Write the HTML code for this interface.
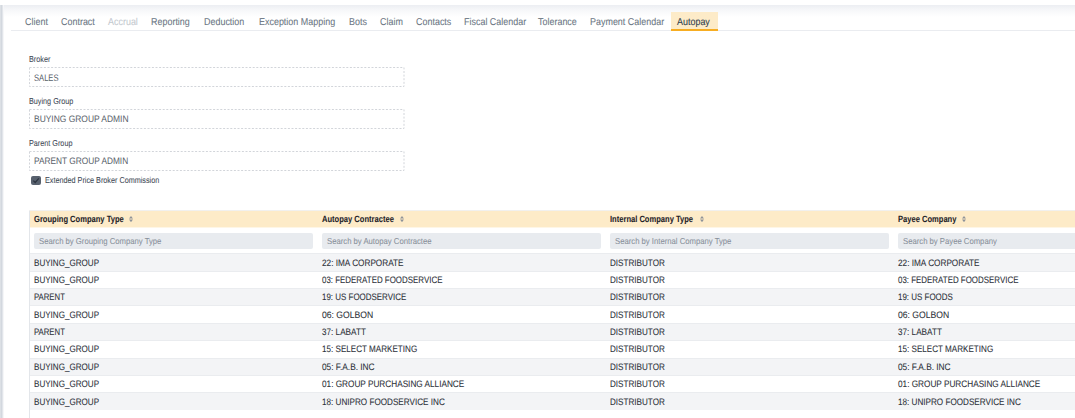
<!DOCTYPE html><html><head><meta charset="utf-8"><style>
html,body{margin:0;padding:0}
body{width:1075px;height:418px;overflow:hidden;background:#fff;position:relative;font-family:"Liberation Sans",sans-serif}
.t{position:absolute;white-space:nowrap;transform-origin:0 0;line-height:1;-webkit-text-stroke:0.08px currentColor;text-rendering:geometricPrecision}
.b{position:absolute}
</style></head><body>
<div class="b" style="left:0;top:5px;width:1075px;height:12px;background:linear-gradient(#eceef2,#f6f7f9 40%,#fff)"></div>
<div class="b" style="left:0;top:5px;width:1px;height:413px;background:#dce0e5"></div>
<div class="b" style="left:1px;top:5px;width:1px;height:413px;background:#d3d8df"></div>
<div class="b" style="left:2px;top:5px;width:1px;height:413px;background:#e2e5ea"></div>
<div class="b" style="left:3px;top:5px;width:1px;height:413px;background:#f5f6f8"></div>
<div class="b" style="left:11px;top:30px;width:1064px;height:1px;background:#eaecf0"></div>
<div class="b" style="left:671px;top:12px;width:47px;height:17px;background:#fdebc8"></div>
<div class="b" style="left:671px;top:29px;width:47px;height:2px;background:#f7ad22"></div>
<div class="t" style="left:24.70px;top:13px;font-size:10px;line-height:20px;color:#6b7683;font-weight:400;transform:scaleX(0.895);">Client</div>
<div class="t" style="left:60.70px;top:13px;font-size:10px;line-height:20px;color:#6b7683;font-weight:400;transform:scaleX(0.895);">Contract</div>
<div class="t" style="left:108.30px;top:13px;font-size:10px;line-height:20px;color:#c4c9cf;font-weight:400;transform:scaleX(0.895);">Accrual</div>
<div class="t" style="left:151.20px;top:13px;font-size:10px;line-height:20px;color:#6b7683;font-weight:400;transform:scaleX(0.895);">Reporting</div>
<div class="t" style="left:203.80px;top:13px;font-size:10px;line-height:20px;color:#6b7683;font-weight:400;transform:scaleX(0.895);">Deduction</div>
<div class="t" style="left:258.60px;top:13px;font-size:10px;line-height:20px;color:#6b7683;font-weight:400;transform:scaleX(0.895);">Exception Mapping</div>
<div class="t" style="left:348.80px;top:13px;font-size:10px;line-height:20px;color:#6b7683;font-weight:400;transform:scaleX(0.895);">Bots</div>
<div class="t" style="left:379.70px;top:13px;font-size:10px;line-height:20px;color:#6b7683;font-weight:400;transform:scaleX(0.895);">Claim</div>
<div class="t" style="left:415.60px;top:13px;font-size:10px;line-height:20px;color:#6b7683;font-weight:400;transform:scaleX(0.895);">Contacts</div>
<div class="t" style="left:464.30px;top:13px;font-size:10px;line-height:20px;color:#6b7683;font-weight:400;transform:scaleX(0.895);">Fiscal Calendar</div>
<div class="t" style="left:538.00px;top:13px;font-size:10px;line-height:20px;color:#6b7683;font-weight:400;transform:scaleX(0.895);">Tolerance</div>
<div class="t" style="left:589.90px;top:13px;font-size:10px;line-height:20px;color:#6b7683;font-weight:400;transform:scaleX(0.895);">Payment Calendar</div>
<div class="t" style="left:677.40px;top:13px;font-size:10px;line-height:20px;color:#2f3d4c;font-weight:400;transform:scaleX(0.895);">Autopay</div>
<div class="t" style="left:29.20px;top:49px;font-size:8.6px;line-height:20px;color:#444c58;font-weight:400;transform:scaleX(0.842);">Broker</div>
<svg class="b" style="left:29px;top:67.3px" width="376" height="20"><rect x="0.5" y="0.5" width="374.5" height="19" fill="none" stroke="#d2d5da" stroke-width="1" stroke-dasharray="2 1.6"/></svg>
<div class="t" style="left:34.10px;top:68px;font-size:9.4px;line-height:20px;color:#575e69;font-weight:400;transform:scaleX(0.81);-webkit-text-stroke:0;">SALES</div>
<div class="t" style="left:29.20px;top:91px;font-size:8.6px;line-height:20px;color:#444c58;font-weight:400;transform:scaleX(0.842);">Buying Group</div>
<svg class="b" style="left:29px;top:109.3px" width="376" height="20"><rect x="0.5" y="0.5" width="374.5" height="19" fill="none" stroke="#d2d5da" stroke-width="1" stroke-dasharray="2 1.6"/></svg>
<div class="t" style="left:34.10px;top:109px;font-size:9.4px;line-height:20px;color:#575e69;font-weight:400;transform:scaleX(0.9);-webkit-text-stroke:0;">BUYING GROUP ADMIN</div>
<div class="t" style="left:29.20px;top:133px;font-size:8.6px;line-height:20px;color:#444c58;font-weight:400;transform:scaleX(0.842);">Parent Group</div>
<svg class="b" style="left:29px;top:151.3px" width="376" height="20"><rect x="0.5" y="0.5" width="374.5" height="19" fill="none" stroke="#d2d5da" stroke-width="1" stroke-dasharray="2 1.6"/></svg>
<div class="t" style="left:34.10px;top:151px;font-size:9.4px;line-height:20px;color:#575e69;font-weight:400;transform:scaleX(0.886);-webkit-text-stroke:0;">PARENT GROUP ADMIN</div>
<div class="b" style="left:31px;top:176px;width:10px;height:9px;border-radius:2px;background:#58616e"></div>
<svg class="b" style="left:31px;top:176px" width="10" height="9"><path d="M2.3 4.6 L4.2 6.5 L7.8 2.4" fill="none" stroke="#2c3440" stroke-width="1.3"/></svg>
<div class="t" style="left:45.20px;top:170px;font-size:8.6px;line-height:20px;color:#444c58;font-weight:400;transform:scaleX(0.842);">Extended Price Broker Commission</div>
<div class="b" style="left:29px;top:210px;width:1046px;height:1px;background:#f1f0ee"></div>
<div class="b" style="left:29px;top:211px;width:1046px;height:16px;background:#fdebc8"></div>
<div class="b" style="left:29px;top:227px;width:1046px;height:1px;background:#fef6e6"></div>
<div class="b" style="left:29px;top:211px;width:1px;height:207px;background:#e3e6ea"></div>
<div class="t" style="left:34.00px;top:209px;font-size:9.0px;line-height:20px;color:#1f2328;font-weight:700;transform:scaleX(0.84);">Grouping Company Type</div>
<svg class="b" style="left:128.7px;top:215.8px" width="4" height="6.2" viewBox="0 0 4 6.2"><path d="M2 0 L4 2.6 L0 2.6 Z M0 3.6 L4 3.6 L2 6.2 Z" fill="#8d9298"/></svg>
<div class="b" style="left:34.0px;top:232.8px;width:279px;height:16px;border-radius:2px;background:#e8ebef"></div>
<div class="t" style="left:38.50px;top:231px;font-size:8.6px;line-height:20px;color:#8a929c;font-weight:400;transform:scaleX(0.897);">Search by Grouping Company Type</div>
<div class="t" style="left:322.00px;top:209px;font-size:9.0px;line-height:20px;color:#1f2328;font-weight:700;transform:scaleX(0.84);">Autopay Contractee</div>
<svg class="b" style="left:400.0px;top:215.8px" width="4" height="6.2" viewBox="0 0 4 6.2"><path d="M2 0 L4 2.6 L0 2.6 Z M0 3.6 L4 3.6 L2 6.2 Z" fill="#8d9298"/></svg>
<div class="b" style="left:322.0px;top:232.8px;width:279px;height:16px;border-radius:2px;background:#e8ebef"></div>
<div class="t" style="left:326.50px;top:231px;font-size:8.6px;line-height:20px;color:#8a929c;font-weight:400;transform:scaleX(0.897);">Search by Autopay Contractee</div>
<div class="t" style="left:610.00px;top:209px;font-size:9.0px;line-height:20px;color:#1f2328;font-weight:700;transform:scaleX(0.84);">Internal Company Type</div>
<svg class="b" style="left:700.2px;top:215.8px" width="4" height="6.2" viewBox="0 0 4 6.2"><path d="M2 0 L4 2.6 L0 2.6 Z M0 3.6 L4 3.6 L2 6.2 Z" fill="#8d9298"/></svg>
<div class="b" style="left:610.0px;top:232.8px;width:279px;height:16px;border-radius:2px;background:#e8ebef"></div>
<div class="t" style="left:614.50px;top:231px;font-size:8.6px;line-height:20px;color:#8a929c;font-weight:400;transform:scaleX(0.897);">Search by Internal Company Type</div>
<div class="t" style="left:898.00px;top:209px;font-size:9.0px;line-height:20px;color:#1f2328;font-weight:700;transform:scaleX(0.84);">Payee Company</div>
<svg class="b" style="left:962.0px;top:215.8px" width="4" height="6.2" viewBox="0 0 4 6.2"><path d="M2 0 L4 2.6 L0 2.6 Z M0 3.6 L4 3.6 L2 6.2 Z" fill="#8d9298"/></svg>
<div class="b" style="left:898.0px;top:232.8px;width:279px;height:16px;border-radius:2px;background:#e8ebef"></div>
<div class="t" style="left:902.50px;top:231px;font-size:8.6px;line-height:20px;color:#8a929c;font-weight:400;transform:scaleX(0.897);">Search by Payee Company</div>
<div class="b" style="left:30px;top:253px;width:1045px;height:18px;background:#f3f4f6;border-top:1px solid #eaecef;box-sizing:border-box"></div>
<div class="t" style="left:34.00px;top:253px;font-size:9.4px;line-height:20px;color:#2b3038;font-weight:400;transform:scaleX(0.8614);">BUYING_GROUP</div>
<div class="t" style="left:322.00px;top:253px;font-size:9.4px;line-height:20px;color:#2b3038;font-weight:400;transform:scaleX(0.8762);">22: IMA CORPORATE</div>
<div class="t" style="left:610.00px;top:253px;font-size:9.4px;line-height:20px;color:#2b3038;font-weight:400;transform:scaleX(0.8649);">DISTRIBUTOR</div>
<div class="t" style="left:898.00px;top:253px;font-size:9.4px;line-height:20px;color:#2b3038;font-weight:400;transform:scaleX(0.8762);">22: IMA CORPORATE</div>
<div class="b" style="left:30px;top:271px;width:1045px;height:17px;background:#ffffff;border-top:1px solid #eaecef;box-sizing:border-box"></div>
<div class="t" style="left:34.00px;top:270px;font-size:9.4px;line-height:20px;color:#2b3038;font-weight:400;transform:scaleX(0.8614);">BUYING_GROUP</div>
<div class="t" style="left:322.00px;top:270px;font-size:9.4px;line-height:20px;color:#2b3038;font-weight:400;transform:scaleX(0.8457);">03: FEDERATED FOODSERVICE</div>
<div class="t" style="left:610.00px;top:270px;font-size:9.4px;line-height:20px;color:#2b3038;font-weight:400;transform:scaleX(0.8649);">DISTRIBUTOR</div>
<div class="t" style="left:898.00px;top:270px;font-size:9.4px;line-height:20px;color:#2b3038;font-weight:400;transform:scaleX(0.8457);">03: FEDERATED FOODSERVICE</div>
<div class="b" style="left:30px;top:288px;width:1045px;height:17px;background:#f3f4f6;border-top:1px solid #eaecef;box-sizing:border-box"></div>
<div class="t" style="left:34.00px;top:287px;font-size:9.4px;line-height:20px;color:#2b3038;font-weight:400;transform:scaleX(0.8274);">PARENT</div>
<div class="t" style="left:322.00px;top:287px;font-size:9.4px;line-height:20px;color:#2b3038;font-weight:400;transform:scaleX(0.8484);">19: US FOODSERVICE</div>
<div class="t" style="left:610.00px;top:287px;font-size:9.4px;line-height:20px;color:#2b3038;font-weight:400;transform:scaleX(0.8649);">DISTRIBUTOR</div>
<div class="t" style="left:898.00px;top:287px;font-size:9.4px;line-height:20px;color:#2b3038;font-weight:400;transform:scaleX(0.8484);">19: US FOODS</div>
<div class="b" style="left:30px;top:305px;width:1045px;height:18px;background:#ffffff;border-top:1px solid #eaecef;box-sizing:border-box"></div>
<div class="t" style="left:34.00px;top:305px;font-size:9.4px;line-height:20px;color:#2b3038;font-weight:400;transform:scaleX(0.8614);">BUYING_GROUP</div>
<div class="t" style="left:322.00px;top:305px;font-size:9.4px;line-height:20px;color:#2b3038;font-weight:400;transform:scaleX(0.918);">06: GOLBON</div>
<div class="t" style="left:610.00px;top:305px;font-size:9.4px;line-height:20px;color:#2b3038;font-weight:400;transform:scaleX(0.8649);">DISTRIBUTOR</div>
<div class="t" style="left:898.00px;top:305px;font-size:9.4px;line-height:20px;color:#2b3038;font-weight:400;transform:scaleX(0.918);">06: GOLBON</div>
<div class="b" style="left:30px;top:323px;width:1045px;height:17px;background:#f3f4f6;border-top:1px solid #eaecef;box-sizing:border-box"></div>
<div class="t" style="left:34.00px;top:322px;font-size:9.4px;line-height:20px;color:#2b3038;font-weight:400;transform:scaleX(0.8274);">PARENT</div>
<div class="t" style="left:322.00px;top:322px;font-size:9.4px;line-height:20px;color:#2b3038;font-weight:400;transform:scaleX(0.871);">37: LABATT</div>
<div class="t" style="left:610.00px;top:322px;font-size:9.4px;line-height:20px;color:#2b3038;font-weight:400;transform:scaleX(0.8649);">DISTRIBUTOR</div>
<div class="t" style="left:898.00px;top:322px;font-size:9.4px;line-height:20px;color:#2b3038;font-weight:400;transform:scaleX(0.871);">37: LABATT</div>
<div class="b" style="left:30px;top:340px;width:1045px;height:18px;background:#ffffff;border-top:1px solid #eaecef;box-sizing:border-box"></div>
<div class="t" style="left:34.00px;top:339px;font-size:9.4px;line-height:20px;color:#2b3038;font-weight:400;transform:scaleX(0.8614);">BUYING_GROUP</div>
<div class="t" style="left:322.00px;top:339px;font-size:9.4px;line-height:20px;color:#2b3038;font-weight:400;transform:scaleX(0.8632);">15: SELECT MARKETING</div>
<div class="t" style="left:610.00px;top:339px;font-size:9.4px;line-height:20px;color:#2b3038;font-weight:400;transform:scaleX(0.8649);">DISTRIBUTOR</div>
<div class="t" style="left:898.00px;top:339px;font-size:9.4px;line-height:20px;color:#2b3038;font-weight:400;transform:scaleX(0.8632);">15: SELECT MARKETING</div>
<div class="b" style="left:30px;top:358px;width:1045px;height:17px;background:#f3f4f6;border-top:1px solid #eaecef;box-sizing:border-box"></div>
<div class="t" style="left:34.00px;top:357px;font-size:9.4px;line-height:20px;color:#2b3038;font-weight:400;transform:scaleX(0.8614);">BUYING_GROUP</div>
<div class="t" style="left:322.00px;top:357px;font-size:9.4px;line-height:20px;color:#2b3038;font-weight:400;transform:scaleX(0.8858);">05: F.A.B. INC</div>
<div class="t" style="left:610.00px;top:357px;font-size:9.4px;line-height:20px;color:#2b3038;font-weight:400;transform:scaleX(0.8649);">DISTRIBUTOR</div>
<div class="t" style="left:898.00px;top:357px;font-size:9.4px;line-height:20px;color:#2b3038;font-weight:400;transform:scaleX(0.8858);">05: F.A.B. INC</div>
<div class="b" style="left:30px;top:375px;width:1045px;height:17px;background:#ffffff;border-top:1px solid #eaecef;box-sizing:border-box"></div>
<div class="t" style="left:34.00px;top:374px;font-size:9.4px;line-height:20px;color:#2b3038;font-weight:400;transform:scaleX(0.8614);">BUYING_GROUP</div>
<div class="t" style="left:322.00px;top:374px;font-size:9.4px;line-height:20px;color:#2b3038;font-weight:400;transform:scaleX(0.8762);">01: GROUP PURCHASING ALLIANCE</div>
<div class="t" style="left:610.00px;top:374px;font-size:9.4px;line-height:20px;color:#2b3038;font-weight:400;transform:scaleX(0.8649);">DISTRIBUTOR</div>
<div class="t" style="left:898.00px;top:374px;font-size:9.4px;line-height:20px;color:#2b3038;font-weight:400;transform:scaleX(0.8762);">01: GROUP PURCHASING ALLIANCE</div>
<div class="b" style="left:30px;top:392px;width:1045px;height:18px;background:#f3f4f6;border-top:1px solid #eaecef;box-sizing:border-box"></div>
<div class="t" style="left:34.00px;top:392px;font-size:9.4px;line-height:20px;color:#2b3038;font-weight:400;transform:scaleX(0.8614);">BUYING_GROUP</div>
<div class="t" style="left:322.00px;top:392px;font-size:9.4px;line-height:20px;color:#2b3038;font-weight:400;transform:scaleX(0.8675);">18: UNIPRO FOODSERVICE INC</div>
<div class="t" style="left:610.00px;top:392px;font-size:9.4px;line-height:20px;color:#2b3038;font-weight:400;transform:scaleX(0.8649);">DISTRIBUTOR</div>
<div class="t" style="left:898.00px;top:392px;font-size:9.4px;line-height:20px;color:#2b3038;font-weight:400;transform:scaleX(0.8675);">18: UNIPRO FOODSERVICE INC</div>
</body></html>
